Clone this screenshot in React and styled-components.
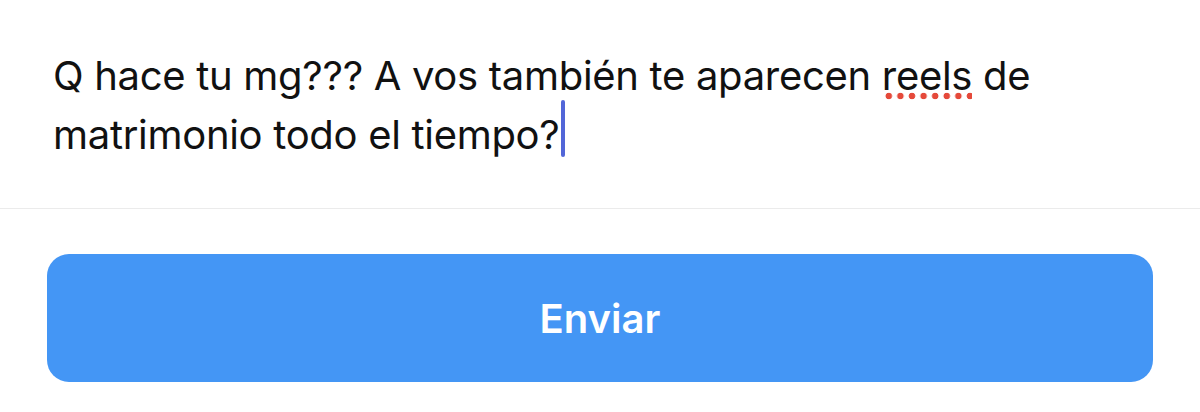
import React from 'react'
import styled, { createGlobalStyle } from 'styled-components'

const GlobalStyle = createGlobalStyle`
  html, body {
    margin: 0;
    padding: 0;
    background: #ffffff;
  }
  body {
    font-family: Inter, "Noto Sans", "Liberation Sans", sans-serif;
    -webkit-font-smoothing: antialiased;
  }
`

const Sheet = styled.div`
  width: 1200px;
  height: 412px;
  display: flex;
  flex-direction: column;
  background: #fff;
  overflow: hidden;
`

const Composer = styled.div`
  padding: 52px 40px 0 53px;
  height: 209px;
  box-sizing: border-box;
  border-bottom: 1.5px solid #ebebeb;
`

const Message = styled.p`
  margin: 0;
  font-size: 40px;
  line-height: 48px;
  letter-spacing: -0.3px;
  color: #111;
  white-space: nowrap;
`

const Misspelled = styled.span`
  background-image: radial-gradient(circle, #e5493a 3px, transparent 3.6px);
  background-size: 11.6px 8px;
  background-repeat: repeat-x;
  background-position: 1px 100%;
  padding-bottom: 0px;
`

const Caret = styled.span`
  display: inline-block;
  width: 4px;
  height: 57px;
  margin-left: 2px;
  border-radius: 2px;
  background: #5266d8;
  vertical-align: -8px;
`

const Footer = styled.div`
  flex: 1;
  padding: 45px 47px 0 47px;
`

const SendButton = styled.button`
  width: 100%;
  height: 128px;
  border: none;
  border-radius: 22px;
  background: #4496f5;
  color: #fff;
  font-family: Inter, "Noto Sans", "Liberation Sans", sans-serif;
  font-size: 40px;
  font-weight: 600;
  letter-spacing: 0px;
  display: flex;
  align-items: center;
  justify-content: center;
  cursor: pointer;
`

export default function App() {
  return (
    <>
      <GlobalStyle />
      <Sheet>
        <Composer>
          <Message>
            Q hace tu mg??? A vos también te aparecen <Misspelled>reels</Misspelled> de
            <br />
            matrimonio todo el tiempo?<Caret />
          </Message>
        </Composer>
        <Footer>
          <SendButton>Enviar</SendButton>
        </Footer>
      </Sheet>
    </>
  )
}
